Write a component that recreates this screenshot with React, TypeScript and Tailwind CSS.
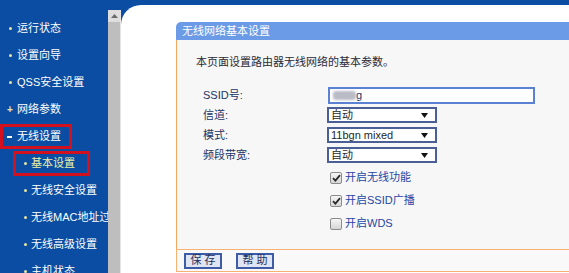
import React from 'react';

type MenuItem = {
  label: string;
  level: 0 | 1;
  mark: 'dot' | 'plus' | 'minus';
  boxed?: boolean;
  active?: boolean;
};

const menu: MenuItem[] = [
  { label: '运行状态', level: 0, mark: 'dot' },
  { label: '设置向导', level: 0, mark: 'dot' },
  { label: 'QSS安全设置', level: 0, mark: 'dot' },
  { label: '网络参数', level: 0, mark: 'plus' },
  { label: '无线设置', level: 0, mark: 'minus', boxed: true },
  { label: '基本设置', level: 1, mark: 'dot', boxed: true, active: true },
  { label: '无线安全设置', level: 1, mark: 'dot' },
  { label: '无线MAC地址过滤', level: 1, mark: 'dot' },
  { label: '无线高级设置', level: 1, mark: 'dot' },
  { label: '主机状态', level: 1, mark: 'dot' }
];

const Mark = ({ mark }: { mark: MenuItem['mark'] }) => {
  if (mark === 'plus') {
    return <span className="w-[6px] text-[10px] leading-none font-bold text-[#e8e6a0]">+</span>;
  }
  if (mark === 'minus') {
    return (
      <span className="w-[6px] flex items-center">
        <span className="block w-[5px] h-[2px] bg-white" />
      </span>
    );
  }
  return (
    <span className="w-[6px] flex items-center justify-center">
      <span className="block w-[3px] h-[3px] rounded-full bg-[#e6e6a2]" />
    </span>
  );
};

const Sidebar = () => (
  <div className="w-[108px] shrink-0 overflow-hidden pt-[15px]">
    {menu.map((item) => (
      <div key={item.label} className="h-[27px] flex items-center whitespace-nowrap">
        <div
          className={`flex items-center h-[25px] border-[3px] ${
            item.boxed ? 'border-[#d3101e]' : 'border-transparent'
          } ${
            item.level === 0
              ? 'pl-[4px] gap-[4px]' + (item.boxed ? ' w-[72px]' : '')
              : 'ml-[13px] pl-[6px] gap-[3px]' + (item.boxed ? ' w-[77px]' : '')
          }`}
        >
          <Mark mark={item.mark} />
          <span className={`text-[11px] ${item.active ? 'text-[#f0f0a4]' : 'text-white'}`}>
            {item.label}
          </span>
        </div>
      </div>
    ))}
  </div>
);

const Scrollbar = () => (
  <div className="w-[13px] shrink-0 mt-[10px] flex flex-col bg-[#bebebe] border-r border-[#e4e4e4]">
    <div className="h-[12px] bg-[#dedede] flex items-center justify-center">
      <svg width="7" height="4" viewBox="0 0 7 4">
        <path d="M0 4 L3.5 0 L7 4 Z" fill="#6b6b6b" />
      </svg>
    </div>
  </div>
);

const Select = ({ value }: { value: string }) => (
  <div className="w-[110px] h-[16px] border-2 border-[#4a5f96] bg-white flex items-center justify-between pl-[2px] pr-[7px]">
    <span className="text-[11px] leading-none text-[#1f1f1f]">{value}</span>
    <svg width="7" height="5" viewBox="0 0 7 5">
      <path d="M0 0 L7 0 L3.5 5 Z" fill="#111" />
    </svg>
  </div>
);

const Check = ({ checked, label }: { checked: boolean; label: string }) => (
  <div className="h-[23px] flex items-center pl-[127px] gap-[3px]">
    <span className="w-[12px] h-[12px] rounded-[2px] border border-[#8c8c8c] bg-gradient-to-b from-[#f6f6f6] to-[#d6d6d6] flex items-center justify-center">
      {checked && (
        <svg width="9" height="8" viewBox="0 0 9 8">
          <path d="M1 4.2 L3.4 6.6 L8 1.2" stroke="#2a2a2a" strokeWidth="1.8" fill="none" />
        </svg>
      )}
    </span>
    <span className="text-[11px] text-[#2546a6]">{label}</span>
  </div>
);

const Row = ({ label, children }: { label: string; children: React.ReactNode }) => (
  <div className="h-[20px] flex items-center">
    <span className="w-[124px] text-[11px] text-[#223465]">{label}</span>
    {children}
  </div>
);

const Panel = () => (
  <div className="flex flex-col">
    <div className="h-[18px] bg-[#6b9be6] rounded-tl-[5px] flex items-center pl-[6px] text-[11px] text-white">
      无线网络基本设置
    </div>
    <div className="h-[209px] bg-[#f7f7f7] border-l border-[#f5a75c] pl-[19px] pt-[14px]">
      <div className="h-[16px] flex items-center text-[11px] text-[#2a2a36]">
        本页面设置路由器无线网络的基本参数。
      </div>
      <div className="ml-[7px] mt-[15px]">
        <Row label="SSID号:">
          <div className="ml-[1px] w-[207px] h-[17px] border-2 border-[#5b82d2] bg-white flex items-center pl-[3px]">
            <span className="block w-[23px] h-[9px] rounded-[3px] bg-[#b9bcc6] blur-[1px]" />
            <span className="text-[11px] leading-none text-[#223465]">g</span>
          </div>
        </Row>
        <Row label="信道:">
          <Select value="自动" />
        </Row>
        <Row label="模式:">
          <Select value="11bgn mixed" />
        </Row>
        <Row label="频段带宽:">
          <Select value="自动" />
        </Row>
        <div className="mt-[1px]">
          <Check checked label="开启无线功能" />
          <Check checked label="开启SSID广播" />
          <Check checked={false} label="开启WDS" />
        </div>
      </div>
    </div>
    <div className="h-[23px] border-t border-b border-l border-[#f5b272] bg-[#f9f9f9] flex items-center pl-[7px] gap-[14px]">
      {['保 存', '帮 助'].map((b) => (
        <div
          key={b}
          className="w-[38px] h-[16px] border-2 border-[#3e5ca6] bg-[#dfe5f2] flex items-center justify-center text-[11px] text-[#1d2c5c] whitespace-pre"
        >
          {b}
        </div>
      ))}
    </div>
  </div>
);

const App = () => (
  <div className="w-[569px] h-[273px] overflow-hidden flex bg-[#0b4da2] font-['Liberation_Sans','Noto_Sans_CJK_SC',sans-serif]">
    <Sidebar />
    <Scrollbar />
    <div className="flex-1 mt-[5px] bg-white rounded-tl-[20px] pl-[55px] pt-[17px] overflow-hidden">
      <Panel />
    </div>
  </div>
);

export default App;
